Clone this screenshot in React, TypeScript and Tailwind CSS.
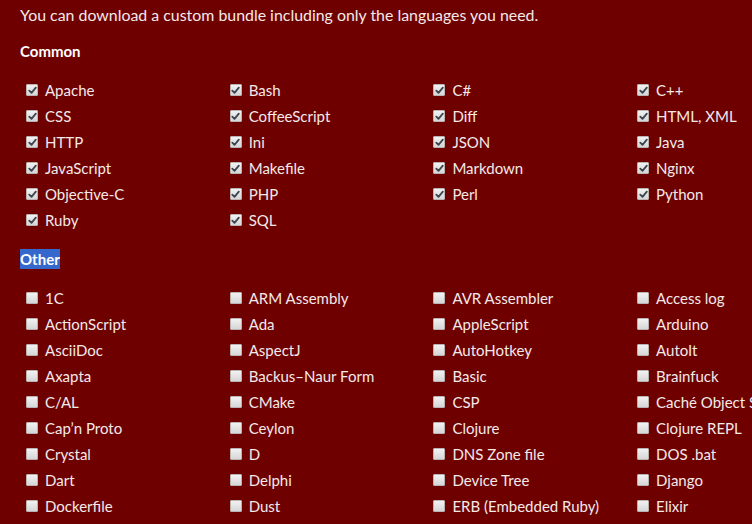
import React from "react";

const common = [
  "Apache", "Bash", "C#", "C++",
  "CSS", "CoffeeScript", "Diff", "HTML, XML",
  "HTTP", "Ini", "JSON", "Java",
  "JavaScript", "Makefile", "Markdown", "Nginx",
  "Objective-C", "PHP", "Perl", "Python",
  "Ruby", "SQL",
];

const other = [
  "1C", "ARM Assembly", "AVR Assembler", "Access log",
  "ActionScript", "Ada", "AppleScript", "Arduino",
  "AsciiDoc", "AspectJ", "AutoHotkey", "AutoIt",
  "Axapta", "Backus–Naur Form", "Basic", "Brainfuck",
  "C/AL", "CMake", "CSP", "Caché Object Script",
  "Cap’n Proto", "Ceylon", "Clojure", "Clojure REPL",
  "Crystal", "D", "DNS Zone file", "DOS .bat",
  "Dart", "Delphi", "Device Tree", "Django",
  "Dockerfile", "Dust", "ERB (Embedded Ruby)", "Elixir",
];

function Box({ checked }: { checked: boolean }) {
  return (
    <span className="ml-[6px] mr-[7px] flex h-[12px] w-[12px] shrink-0 items-center justify-center rounded-[1px] border border-[#b9b3b3] bg-gradient-to-b from-[#f2f2f2] to-[#d6d6d6]">
      {checked && (
        <svg width="9" height="9" viewBox="0 0 9 9">
          <path d="M1.3 4.6 L3.5 6.9 L7.8 1.6" fill="none" stroke="#3d4650" strokeWidth="1.8" strokeLinecap="round" strokeLinejoin="round" />
        </svg>
      )}
    </span>
  );
}

function Grid({ items, checked }: { items: string[]; checked: boolean }) {
  return (
    <div className="grid grid-cols-[repeat(4,203.7px)]">
      {items.map((t) => (
        <label key={t} className="flex h-[26px] items-center whitespace-nowrap">
          <Box checked={checked} />
          <span>{t}</span>
        </label>
      ))}
    </div>
  );
}

export default function App() {
  return (
    <div
      className="h-[524px] w-[752px] overflow-hidden bg-[#6e0000] pl-[20px] text-[15px] text-[#f3e9e9]"
      style={{ fontFamily: "Lato, 'Open Sans', sans-serif" }}
    >
      <p className="mt-[3px] text-[15.9px] leading-[24px]">
        You can download a custom bundle including only the languages you need.
      </p>
      <h3 className="mt-[12px] font-bold leading-[24px] text-white">Common</h3>
      <div className="mt-[14px]">
        <Grid items={common} checked={true} />
      </div>
      <h3 className="mt-[14px] font-bold leading-[24px] text-white">
        <span className="bg-[#3568cc] py-[1px]">Other</span>
      </h3>
      <div className="mt-[14px]">
        <Grid items={other} checked={false} />
      </div>
    </div>
  );
}
